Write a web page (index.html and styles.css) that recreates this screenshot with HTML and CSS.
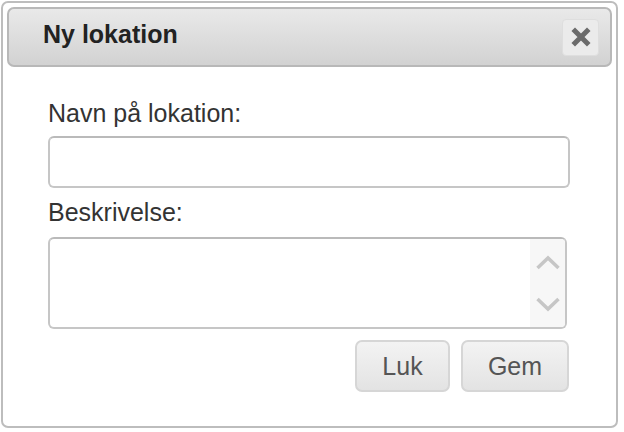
FILE: index.html
```html
<!DOCTYPE html>
<html>
<head>
<meta charset="utf-8">
<link rel="stylesheet" href="styles.css">
</head>
<body>
<div class="dialog">
  <div class="titlebar">
    <span class="title">Ny lokation</span>
    <button class="close" type="button" aria-label="Luk">
      <svg width="20" height="20" viewBox="0 0 20 20"><path d="M4 4 L16 16 M16 4 L4 16" stroke="#6b6b6b" stroke-width="5" stroke-linecap="square" fill="none"/></svg>
    </button>
  </div>
  <div class="content">
    <label class="label">Navn på lokation:</label>
    <input class="field" type="text">
    <label class="label label-second">Beskrivelse:</label>
    <div class="area">
      <textarea class="area-text"></textarea>
      <div class="scrollbar">
        <svg width="26" height="18" viewBox="0 0 26 18"><path d="M2.5 15 L13 5 L23.5 15" stroke="#c6c6c6" stroke-width="3.5" fill="none"/></svg>
        <svg width="26" height="18" viewBox="0 0 26 18"><path d="M2.5 3 L13 13 L23.5 3" stroke="#c6c6c6" stroke-width="3.5" fill="none"/></svg>
      </div>
    </div>
    <div class="buttons">
      <button class="btn btn-luk" type="button">Luk</button>
      <button class="btn btn-gem" type="button">Gem</button>
    </div>
  </div>
</div>
</body>
</html>
```
FILE: styles.css
```css
html, body {
  margin: 0;
  padding: 0;
  background: #ffffff;
}
body {
  font-family: "Liberation Sans", Arial, sans-serif;
  font-size: 25px;
  color: #333333;
}
.dialog {
  box-sizing: border-box;
  margin: 1px 0 0 1px;
  width: 617px;
  height: 427px;
  border: 2px solid #bdbdbd;
  border-radius: 7px;
  padding: 4px;
  background: #ffffff;
}
.titlebar {
  box-sizing: border-box;
  height: 60px;
  display: flex;
  align-items: center;
  justify-content: space-between;
  padding: 0 11px 0 34px;
  border: 2px solid #b8b8b8;
  border-radius: 7px;
  background: linear-gradient(#e9e9e9, #d2d2d2);
}
.title {
  font-weight: bold;
  color: #222222;
  line-height: 30px;
  margin-bottom: 6px;
}
.close {
  box-sizing: border-box;
  width: 37px;
  height: 37px;
  padding: 0;
  border: 1px solid #dedede;
  border-radius: 4px;
  background: #ebebeb;
  display: flex;
  align-items: center;
  justify-content: center;
}
.close svg {
  display: block;
}
.content {
  padding: 32px 0 0 41px;
  display: flex;
  flex-direction: column;
  align-items: flex-start;
}
.label {
  display: block;
  line-height: 29px;
  color: #333333;
}
.label-second {
  margin-top: 10px;
}
.field {
  box-sizing: border-box;
  margin: 8px 0 0 0;
  width: 522px;
  height: 52px;
  border: 2px solid #c6c6c6;
  border-top-color: #bababa;
  border-radius: 6px;
  background: #ffffff;
  outline: none;
  font: inherit;
}
.area {
  box-sizing: border-box;
  margin-top: 10px;
  width: 519px;
  height: 92px;
  border: 2px solid #c6c6c6;
  border-top-color: #bababa;
  border-radius: 6px;
  display: flex;
  overflow: hidden;
  background: #ffffff;
}
.area-text {
  flex: 1;
  border: none;
  outline: none;
  resize: none;
  overflow: hidden;
  margin: 0;
  padding: 0;
  font: inherit;
  background: transparent;
}
.scrollbar {
  width: 35px;
  background: #f7f7f7;
  display: flex;
  flex-direction: column;
  align-items: center;
  justify-content: space-between;
  padding: 14px 0 13px 0;
}
.scrollbar svg {
  display: block;
}
.buttons {
  margin-top: 11px;
  width: 521px;
  display: flex;
  justify-content: flex-end;
  gap: 11px;
}
.btn {
  box-sizing: border-box;
  height: 52px;
  border: 2px solid #d6d6d6;
  border-radius: 7px;
  background: linear-gradient(#f3f3f3, #e3e3e3);
  color: #555555;
  font: inherit;
  font-size: 25px;
  padding: 0;
}
.btn-luk {
  width: 95px;
}
.btn-gem {
  width: 108px;
}
```
